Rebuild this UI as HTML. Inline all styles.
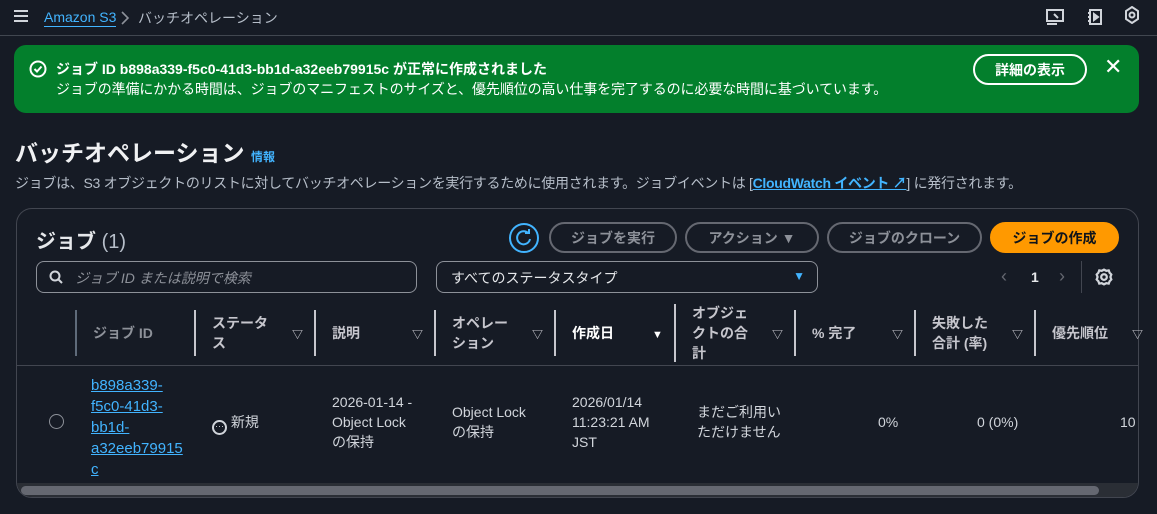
<!DOCTYPE html>
<html><head><meta charset="utf-8"><style>
*{box-sizing:border-box;margin:0;padding:0}
body{width:1157px;height:514px;overflow:hidden;background:#161b25;color:#d1d5db;font-family:"Liberation Sans","Noto Sans CJK JP",sans-serif;font-size:14px;position:relative}
.a{position:absolute}
.hdr{left:0;top:0;width:1157px;height:36px;border-bottom:1px solid #414750}
.flash{left:14px;top:45px;width:1125px;height:68px;background:#037f2c;border-radius:12px;color:#fff}
.btn{position:absolute;height:31px;border:2px solid #656871;border-radius:16px;color:#8d9199;font-weight:bold;font-size:14px;display:flex;align-items:center;justify-content:center}
.th{position:absolute;top:310px;height:46px;border-left:2px solid #c6c6cd;color:#c6c6cd;font-weight:bold;font-size:14px;line-height:20px;display:flex;align-items:center;padding-left:16px}
.tri{position:absolute;font-size:11px;color:#c6c6cd}
.td{position:absolute;color:#d1d5db;font-size:14px;line-height:20px}
</style></head><body>
<div class="a hdr">
 <div class="a" style="left:14px;top:10px;width:14px;height:2px;background:#d1d5db;box-shadow:0 5px 0 #d1d5db,0 10px 0 #d1d5db"></div>
 <div class="a" style="left:44px;top:8px;color:#42b4ff;font-size:14px;border-bottom:1px solid #42b4ff;line-height:18px">Amazon S3</div>
 <svg class="a" style="left:120px;top:11px" width="10" height="14" viewBox="0 0 10 14" fill="none" stroke="#8d9199" stroke-width="1.6"><path d="M2 1l6 6-6 6"/></svg>
 <div class="a" style="left:138px;top:8px;color:#b6bec9;font-size:14px">バッチオペレーション</div>
 <svg class="a" style="left:1045px;top:8px" width="20" height="18" viewBox="0 0 20 18" fill="none" stroke="#d1d5db" stroke-width="2"><rect x="2" y="2" width="16" height="11"/><path d="M2 16h10M9 6l4 4"/></svg>
 <svg class="a" style="left:1087px;top:8px" width="16" height="18" viewBox="0 0 16 18" fill="none" stroke="#d1d5db" stroke-width="2"><rect x="3" y="2" width="11" height="14"/><path d="M1 5h3M1 9h3M1 13h3"/><path d="M7 6l4 3-4 3z" fill="#d1d5db"/></svg>
 <svg class="a" style="left:1124px;top:6px" width="16" height="18" viewBox="0 0 16 18" fill="none" stroke="#d1d5db" stroke-width="2"><path d="M8 1l6 4v8l-6 4-6-4V5z"/><circle cx="8" cy="9" r="2.5"/></svg>
</div>
<div class="a flash">
 <svg class="a" style="left:15px;top:15px" width="18" height="18" viewBox="0 0 18 18" fill="none" stroke="#fff" stroke-width="2"><circle cx="9" cy="9" r="7.5"/><path d="M5.5 9l2.5 2.5 4.5-5"/></svg>
 <div class="a" style="left:42px;top:14px;font-weight:bold;font-size:14px;line-height:20px">ジョブ ID b898a339-f5c0-41d3-bb1d-a32eeb79915c が正常に作成されました</div>
 <div class="a" style="left:42px;top:34px;font-size:14px;line-height:20px;letter-spacing:-0.1px">ジョブの準備にかかる時間は、ジョブのマニフェストのサイズと、優先順位の高い仕事を完了するのに必要な時間に基づいています。</div>
 <div class="a" style="left:959px;top:9px;width:114px;height:31px;border:2px solid #fff;border-radius:16px;font-weight:bold;display:flex;align-items:center;justify-content:center">詳細の表示</div>
 <div class="a" style="left:1090px;top:9px;font-size:22px;line-height:26px">✕</div>
</div>
<div class="a" style="left:15px;top:138px;font-size:23px;font-weight:bold;color:#f0f1f3;line-height:30px">バッチオペレーション <span style="font-size:12px;color:#42b4ff">情報</span></div>
<div class="a" style="left:15px;top:173px;font-size:14px;color:#b6bec9;line-height:20px;letter-spacing:-0.3px">ジョブは、S3 オブジェクトのリストに対してバッチオペレーションを実行するために使用されます。ジョブイベントは [<span style="color:#42b4ff;font-weight:bold;text-decoration:underline">CloudWatch イベント ↗</span>] に発行されます。</div>
<div class="a" style="left:16px;top:208px;width:1123px;height:290px;border:1px solid #424650;border-radius:16px;background:#161b25;overflow:hidden">
 <div class="a" style="left:19px;top:16px;font-size:20px;font-weight:bold;color:#e6e8eb">ジョブ <span style="font-weight:normal;color:#b6bec9">(1)</span></div>
 <svg class="a" style="left:491px;top:13px" width="32" height="32" viewBox="0 0 32 32" fill="none" stroke="#42b4ff" stroke-width="2"><circle cx="16" cy="16" r="14"/><path d="M20.5 11.5A6.5 6.5 0 1 0 22 17"/><path d="M17 11h4V7"/></svg>
 <div class="btn" style="left:532px;top:13px;width:128px">ジョブを実行</div>
 <div class="btn" style="left:668px;top:13px;width:134px">アクション ▼</div>
 <div class="btn" style="left:810px;top:13px;width:155px">ジョブのクローン</div>
 <div class="btn" style="left:973px;top:13px;width:129px;background:#ff9900;border-color:#ff9900;color:#0f141a">ジョブの作成</div>
 <div class="a" style="left:19px;top:52px;width:381px;height:32px;border:1px solid #8d9199;border-radius:8px;color:#8d9199;font-style:italic;padding:6px 0 0 38px">ジョブ ID または説明で検索</div>
 <svg class="a" style="left:32px;top:61px" width="14" height="14" viewBox="0 0 14 14" fill="none" stroke="#d1d5db" stroke-width="2"><circle cx="6" cy="6" r="4.5"/><path d="M9.5 9.5l3.5 3.5"/></svg>
 <div class="a" style="left:419px;top:52px;width:382px;height:32px;border:1px solid #8d9199;border-radius:8px;color:#e6e8eb;padding:6px 0 0 14px">すべてのステータスタイプ<span style="position:absolute;right:12px;top:7px;color:#42b4ff;font-size:12px">▼</span></div>
 <div class="a" style="left:984px;top:57px;color:#656871;font-size:18px">‹</div>
 <div class="a" style="left:1014px;top:60px;color:#e6e8eb;font-weight:bold">1</div>
 <div class="a" style="left:1042px;top:57px;color:#656871;font-size:18px">›</div>
 <div class="a" style="left:1064px;top:52px;width:1px;height:32px;background:#424650"></div>
 <svg class="a" style="left:1078px;top:59px" width="18" height="18" viewBox="0 0 16 16" fill="none" stroke="#d1d5db" stroke-width="2"><circle cx="8" cy="8" r="2.5"/><path d="M8 1.5l2 1 2.2-.4.8 2.1 1.5 1.6-.8 2.2.8 2.2-1.5 1.6-.8 2.1-2.2-.4-2 1-2-1-2.2.4-.8-2.1L1.5 10.2l.8-2.2-.8-2.2 1.5-1.6.8-2.1 2.2.4z"/></svg>
 <div class="a" style="left:0;top:156px;width:1123px;height:1px;background:#424650"></div>
 <div class="a" style="left:0;top:274px;width:1123px;height:16px;background:#2a2e35"></div>
 <div class="a" style="left:4px;top:277px;width:1078px;height:9px;background:#656871;border-radius:5px"></div>
</div>
<div class="th" style="left:75px;border-color:#5f6b7a;color:#8d9199">ジョブ ID</div>
<div class="th" style="left:194px;width:120px">ステータ<br>ス<span class="tri" style="left:96px;top:15px">▽</span></div>
<div class="th" style="left:314px;width:120px">説明<span class="tri" style="left:96px;top:15px">▽</span></div>
<div class="th" style="left:434px;width:120px">オペレー<br>ション<span class="tri" style="left:96px;top:15px">▽</span></div>
<div class="th" style="left:554px;width:120px;color:#fff">作成日<span class="tri" style="left:96px;top:15px;color:#fff">▼</span></div>
<div class="th" style="left:674px;width:120px;top:304px;height:58px">オブジェ<br>クトの合<br>計<span class="tri" style="left:96px;top:21px">▽</span></div>
<div class="th" style="left:794px;width:120px">% 完了<span class="tri" style="left:96px;top:15px">▽</span></div>
<div class="th" style="left:914px;width:120px">失敗した<br>合計 (率)<span class="tri" style="left:96px;top:15px">▽</span></div>
<div class="th" style="left:1034px;width:120px">優先順位<span class="tri" style="left:96px;top:15px">▽</span></div>
<div class="a" style="left:49px;top:414px;width:15px;height:15px;border:1px solid #8d9199;border-radius:50%"></div>
<div class="td" style="left:91px;top:375px;color:#42b4ff;line-height:21px;font-size:15px"><u>b898a339-</u><br><u>f5c0-41d3-</u><br><u>bb1d-</u><br><u>a32eeb79915</u><br><u>c</u></div>
<div class="td" style="left:212px;top:412px"><span style="display:inline-block;width:15px;height:15px;border:2px solid #d1d5db;border-radius:50%;font-size:9px;line-height:8px;text-align:center;vertical-align:-2px">···</span> 新規</div>
<div class="td" style="left:332px;top:392px">2026-01-14 -<br>Object Lock<br>の保持</div>
<div class="td" style="left:452px;top:402px">Object Lock<br>の保持</div>
<div class="td" style="left:572px;top:392px">2026/01/14<br>11:23:21 AM<br>JST</div>
<div class="td" style="left:697px;top:402px">まだご利用い<br>ただけません</div>
<div class="td" style="left:878px;top:412px">0%</div>
<div class="td" style="left:977px;top:412px">0 (0%)</div>
<div class="td" style="left:1120px;top:412px">10</div>
</body></html>
